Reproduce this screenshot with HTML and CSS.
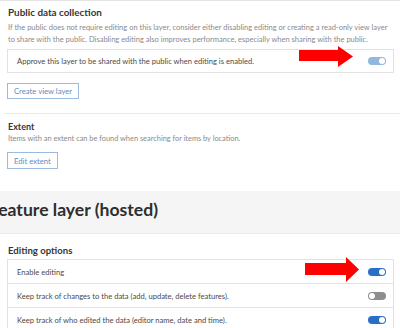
FILE: index.html
```html
<!DOCTYPE html>
<html lang="en">
<head>
  <meta charset="UTF-8">
  <meta name="viewport" content="width=device-width, initial-scale=1.0">
  <title>Item settings</title>
  <link rel="stylesheet" href="styles.css">
</head>
<body>
  <div class="top-edge"></div>

  <!-- Public data collection -->
  <section class="card">
    <h2 class="card-title">Public data collection</h2>
    <p class="hint">If the public does not require editing on this layer, consider either disabling editing or creating a read-only view layer<br>to share with the public. Disabling editing also improves performance, especially when sharing with the public.</p>
    <div class="option-box">
      <span class="option-text">Approve this layer to be shared with the public when editing is enabled.</span>
      <span class="toggle toggle-soft"></span>
    </div>
    <button class="btn">Create view layer</button>
  </section>

  <hr class="divider">

  <!-- Extent -->
  <section class="card card-extent">
    <h3 class="sub-title">Extent</h3>
    <p class="hint">Items with an extent can be found when searching for items by location.</p>
    <button class="btn">Edit extent</button>
  </section>

  <div class="page-band">
    <h1 class="page-title">Feature layer (hosted)</h1>
  </div>

  <!-- Editing options -->
  <section class="card card-editing">
    <h2 class="card-title small">Editing options</h2>
    <div class="option-list">
      <div class="option-row">
        <span class="option-text">Enable editing</span>
        <span class="toggle toggle-on"></span>
      </div>
      <div class="option-row">
        <span class="option-text">Keep track of changes to the data (add, update, delete features).</span>
        <span class="toggle toggle-off"></span>
      </div>
      <div class="option-row">
        <span class="option-text">Keep track of who edited the data (editor name, date and time).</span>
        <span class="toggle toggle-on"></span>
      </div>
    </div>
  </section>

  <!-- Annotation arrows -->
  <svg class="arrow arrow-one" width="54" height="22" viewBox="0 0 54 22">
    <polygon points="0,4 39,4 39,0 54,10.5 39,21 39,15 0,15" fill="#ff0000"/>
  </svg>
  <svg class="arrow arrow-two" width="54" height="26" viewBox="0 0 54 26">
    <polygon points="0,6 41,6 41,0 54,12.5 41,25 41,18 0,18" fill="#ff0000"/>
  </svg>
</body>
</html>
```

FILE: styles.css
```css
* {
  margin: 0;
  padding: 0;
  box-sizing: border-box;
}

body {
  font-family: Lato, 'Open Sans', sans-serif;
  background: #ffffff;
  color: #4a4a4a;
  width: 400px;
  height: 328px;
  overflow: hidden;
  position: relative;
}

.top-edge {
  height: 1px;
  background: #e4e4e4;
}

.card {
  padding: 4px 6px 0 8px;
}

.card-title {
  font-size: 9.9px;
  line-height: 14px;
  font-weight: 700;
  color: #363636;
  margin-bottom: 3px;
}

.card-title.small {
  font-size: 9.6px;
  margin-bottom: 1px;
}

.sub-title {
  font-size: 9px;
  line-height: 13px;
  font-weight: 700;
  color: #363636;
}

.hint {
  font-size: 7.5px;
  line-height: 12px;
  color: #8a8a8a;
  margin-right: -4px;
}

.option-box {
  margin: 3px 0 10px -1px;
  height: 24px;
  border: 1px solid #e2e2e2;
  display: flex;
  align-items: center;
  justify-content: space-between;
  padding: 0 7px 0 9px;
}

.option-text {
  font-size: 7.6px;
  color: #4a4a4a;
}

.btn {
  display: block;
  margin-left: -1px;
  height: 16px;
  padding: 0 6px;
  background: #ffffff;
  border: 1px solid #9bbbe0;
  color: #5f8cc0;
  font-family: inherit;
  font-size: 7.7px;
}

.divider {
  border: none;
  border-top: 1px solid #e9e9e9;
  margin: 14px 0 0 4px;
}

.card-extent {
  padding-top: 6px;
  padding-bottom: 22px;
}

.card-extent .hint {
  font-size: 7.4px;
  margin-bottom: 7px;
}

.card-extent .btn {
  height: 17px;
}

.page-band {
  background: #f5f5f5;
  height: 43px;
  padding-top: 8px;
  border-bottom: 1px solid #ececec;
}

.page-title {
  font-size: 17.6px;
  line-height: 22px;
  font-weight: 700;
  color: #2e2e2e;
  margin-left: -11px;
}

.card-editing {
  padding-top: 10px;
}

.option-list {
  margin-left: -1px;
  border: 1px solid #e2e2e2;
  border-bottom: none;
}

.option-row {
  height: 24px;
  border-bottom: 1px solid #e2e2e2;
  display: flex;
  align-items: center;
  justify-content: space-between;
  padding: 0 7px 0 9px;
}

/* Toggle switches */
.toggle {
  width: 18px;
  height: 8px;
  border-radius: 4px;
  position: relative;
  flex-shrink: 0;
}

.toggle::after {
  content: "";
  position: absolute;
  top: 1px;
  right: 1px;
  width: 6px;
  height: 6px;
  border-radius: 50%;
  background: #ffffff;
}

.toggle-soft { background: #93b7df; }
.toggle-on { background: #2a6fc4; }
.toggle-off { background: #8e8e8e; }

.toggle-off::after {
  right: auto;
  left: 1px;
}

/* Annotation arrows */
.arrow {
  position: absolute;
}

.arrow-one {
  left: 299px;
  top: 46px;
}

.arrow-two {
  left: 305px;
  top: 257px;
}
```
